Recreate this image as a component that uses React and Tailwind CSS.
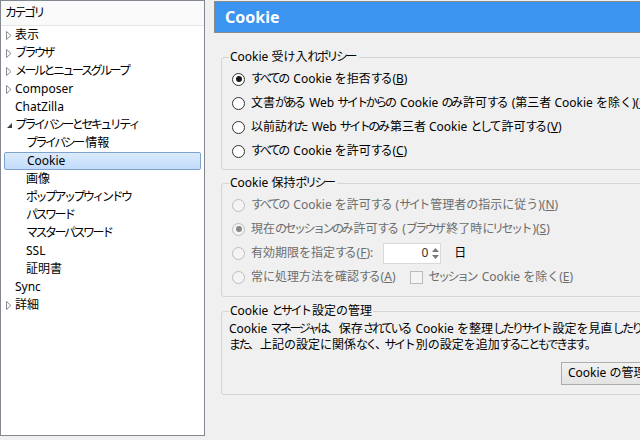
import React from "react";

const font = "font-['Segoe_UI','Noto_Sans','Noto_Sans_CJK_JP',sans-serif]";

// kana in the reference font are narrow; tighten just those runs
function jp(children, cls) {
  return React.Children.map(children, (c) => {
    if (typeof c !== "string") return c;
    return c.split(/([\u3000-\u30ff]+)/).map((part, i) =>
      /[\u3000-\u30ff]/.test(part) ? (
        <React.Fragment key={i}>
          <span className={cls}>{part.slice(0, -1)}</span>
          {part.slice(-1)}
        </React.Fragment>
      ) : (
        part
      )
    );
  });
}

function Arrow({ open }) {
  if (open)
    return (
      <svg width="7" height="7" viewBox="0 0 7 7" className="shrink-0">
        <path d="M6 1 L6 6 L1 6 Z" fill="#3c3c3c" />
      </svg>
    );
  return (
    <svg width="6" height="9" viewBox="0 0 6 9" className="shrink-0">
      <path d="M0.5 0.5 L5 4.5 L0.5 8.5 Z" fill="none" stroke="#8c8c8c" strokeWidth="1" />
    </svg>
  );
}

function TreeItem({ label, level = 0, arrow, selected }) {
  return (
    <div
      className={
        "h-[18px] flex items-center " +
        (selected
          ? "mx-[3px] rounded-[2px] border border-[#7da2ce] bg-gradient-to-b from-[#dcebfc] to-[#c1dbfc]"
          : "")
      }
    >
      <div className={level === 1 ? (selected ? "w-[22px]" : "w-[25px]") : "w-[4px]"} />
      {level === 0 && (
        <div className="w-[10px] flex items-center justify-start pl-[1px]">
          {arrow ? <Arrow open={arrow === "open"} /> : null}
        </div>
      )}
      <span className="text-[12px] leading-[18px] text-black whitespace-nowrap">
        {jp(label, "tracking-[-2.5px]")}
      </span>
    </div>
  );
}

function Radio({ checked, disabled }) {
  return (
    <span
      className={
        "w-[13px] h-[13px] rounded-full border flex items-center justify-center shrink-0 " +
        (disabled ? "border-[#bcbcbc] bg-[#f4f4f4]" : "border-[#333] bg-white")
      }
    >
      {checked && (
        <span className={"w-[6px] h-[6px] rounded-full " + (disabled ? "bg-[#8a8a8a]" : "bg-[#1a1a1a]")} />
      )}
    </span>
  );
}

function RadioRow({ checked, disabled, children }) {
  return (
    <div className="h-[24px] flex items-center gap-[6px] pl-[3px]">
      <Radio checked={checked} disabled={disabled} />
      <span className={"text-[12px] whitespace-nowrap " + (disabled ? "text-[#6d6d6d]" : "text-black")}>
        {jp(children, "tracking-[-2.5px]")}
      </span>
    </div>
  );
}

function Group({ title, className, children }) {
  return (
    <fieldset className={"border border-[#d5d5d5] rounded-[3px] px-[7px] " + className}>
      <legend className="px-[1px] text-[12px] leading-[16px] text-black whitespace-nowrap">
        {jp(title, "tracking-[-2.5px]")}
      </legend>
      {children}
    </fieldset>
  );
}

const U = ({ children }) => <span className="underline">{children}</span>;

export default function App() {
  return (
    <div className={"w-[640px] h-[440px] overflow-hidden bg-[#f0f0f0] flex " + font}>
      <div className="w-[205px] h-[436px] shrink-0 bg-white border border-[#828790] flex flex-col">
        <div className="h-[25px] flex items-center pl-[4px] text-[12px] text-black bg-[#fafafa] border-b border-[#e5e5e5]">
          {jp("カテゴリ", "tracking-[-2.5px]")}
        </div>
        <TreeItem label="表示" arrow="closed" />
        <TreeItem label="ブラウザ" arrow="closed" />
        <TreeItem label="メールとニュースグループ" arrow="closed" />
        <TreeItem label="Composer" arrow="closed" />
        <TreeItem label="ChatZilla" />
        <TreeItem label="プライバシーとセキュリティ" arrow="open" />
        <TreeItem label="プライバシー情報" level={1} />
        <TreeItem label="Cookie" level={1} selected />
        <TreeItem label="画像" level={1} />
        <TreeItem label="ポップアップウィンドウ" level={1} />
        <TreeItem label="パスワード" level={1} />
        <TreeItem label="マスターパスワード" level={1} />
        <TreeItem label="SSL" level={1} />
        <TreeItem label="証明書" level={1} />
        <TreeItem label="Sync" />
        <TreeItem label="詳細" arrow="closed" />
      </div>

      <div className="ml-[9px] pt-[1px] w-[480px] shrink-0">
        <div className="h-[32px] bg-[#3b94ef] border border-[#8a8a8a] flex items-center pl-[10px]">
          <span className="text-white font-bold text-[16px]">Cookie</span>
        </div>

        <div className="ml-[7px]">
          <Group title="Cookie 受け入れポリシー" className="mt-[16px] pt-[2px] pb-[6px]">
            <RadioRow checked>
              すべての Cookie を拒否する(<U>B</U>)
            </RadioRow>
            <RadioRow>
              文書がある Web サイトからの Cookie のみ許可する (第三者 Cookie を除く)(<U>O</U>)
            </RadioRow>
            <RadioRow>
              以前訪れた Web サイトのみ第三者 Cookie として許可する(<U>V</U>)
            </RadioRow>
            <RadioRow>
              すべての Cookie を許可する(<U>C</U>)
            </RadioRow>
          </Group>

          <Group title="Cookie 保持ポリシー" className="mt-[5px] pt-[2px] pb-[7px]">
            <RadioRow disabled>
              すべての Cookie を許可する (サイト管理者の指示に従う)(<U>N</U>)
            </RadioRow>
            <RadioRow disabled checked>
              現在のセッションのみ許可する (ブラウザ終了時にリセット)(<U>S</U>)
            </RadioRow>
            <div className="h-[24px] flex items-center">
              <RadioRow disabled>
                有効期限を指定する(<U>F</U>):
              </RadioRow>
              <div className="ml-[10px] w-[58px] h-[21px] bg-white border border-[#d9d9d9] flex items-center justify-end">
                <span className="text-[12px] text-[#333] mr-[2px]">0</span>
                <div className="w-[10px] h-full flex flex-col items-center justify-center gap-[3px]">
                  <svg width="7" height="4" viewBox="0 0 7 4">
                    <path d="M0 4 L3.5 0 L7 4 Z" fill="#777" />
                  </svg>
                  <svg width="7" height="4" viewBox="0 0 7 4">
                    <path d="M0 0 L3.5 4 L7 0 Z" fill="#777" />
                  </svg>
                </div>
              </div>
              <span className="ml-[13px] text-[12px] text-black">日</span>
            </div>
            <div className="h-[24px] flex items-center">
              <RadioRow disabled>
                常に処理方法を確認する(<U>A</U>)
              </RadioRow>
              <span className="ml-[14px] w-[13px] h-[13px] border border-[#bcbcbc] bg-[#f4f4f4]" />
              <span className="ml-[6px] text-[12px] text-[#6d6d6d] whitespace-nowrap">
                {jp(["セッション Cookie を除く("], "tracking-[-2.5px]")}
                <U>E</U>)
              </span>
            </div>
          </Group>

          <Group title="Cookie とサイト設定の管理" className="mt-[6px] pt-[2px] pb-[9px]">
            <p className="text-[12px] leading-[16px] text-black whitespace-nowrap">
              {jp("Cookie マネージャは、保存されている Cookie を整理したりサイト設定を見直したりできます。", "tracking-[-2.5px]")}
            </p>
            <p className="text-[12px] leading-[16px] text-black whitespace-nowrap">
              {jp("また、上記の設定に関係なく、サイト別の設定を追加することもできます。", "tracking-[-2.5px]")}
            </p>
            <div className="mt-[6px] pl-[332px]">
              <button className="h-[23px] px-[6px] border border-[#adadad] bg-gradient-to-b from-[#f2f2f2] to-[#e3e3e3] text-[12px] text-black whitespace-nowrap">
                {jp(["Cookie の管理("], "tracking-[-2.5px]")}
                <U>M</U>)...
              </button>
            </div>
          </Group>
        </div>
      </div>
    </div>
  );
}
